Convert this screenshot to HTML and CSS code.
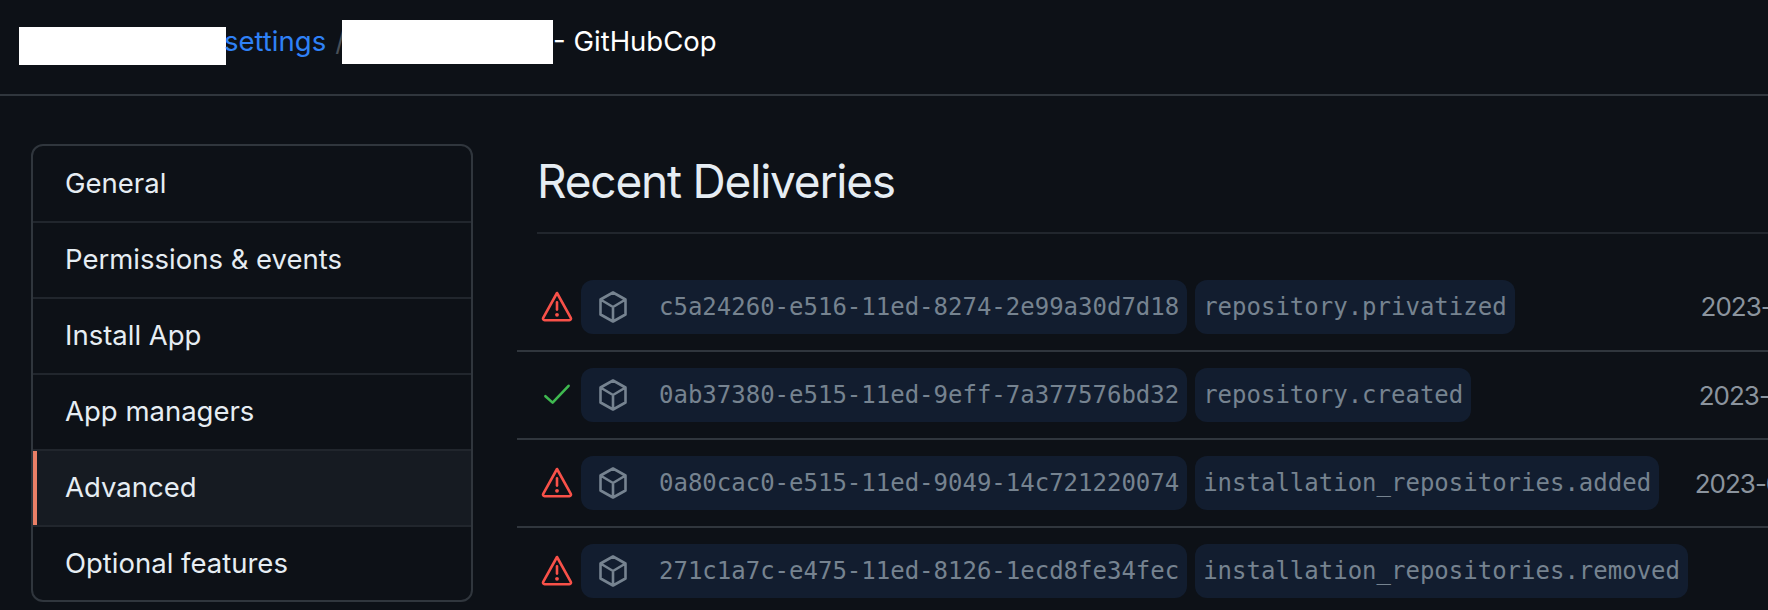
FILE: index.html
```html
<!DOCTYPE html>
<html lang="en">
<head>
<meta charset="utf-8">
<title>Recent Deliveries</title>
<link rel="stylesheet" href="styles.css">
</head>
<body>
<header class="topbar">
  <span class="mask mask-a"></span>
  <a class="crumb-link" href="#">settings</a>
  <span class="crumb-sep">/</span>
  <span class="mask mask-b"></span>
  <span class="crumb-title">- GitHubCop</span>
</header>
<div class="layout">
  <nav class="menu">
    <a class="menu-item" href="#">General</a>
    <a class="menu-item" href="#">Permissions &amp; events</a>
    <a class="menu-item" href="#">Install App</a>
    <a class="menu-item" href="#">App managers</a>
    <a class="menu-item active" href="#">Advanced</a>
    <a class="menu-item" href="#">Optional features</a>
  </nav>
  <main class="content">
    <h1 class="title">Recent Deliveries</h1>
    <ul class="deliveries">
      <li class="delivery">
        <svg class="status warn" viewBox="0 0 16 16"><path d="M8 1 14.900 13.400a.8.8 0 0 1-.7 1.200H1.800a.8.8 0 0 1-.7-1.200Z"/><path class="mark" d="M8 5.700v3.600"/><circle class="dot" cx="8" cy="11.900" r=".95"/></svg>
        <span class="pill guid">
          <svg class="cube" viewBox="0 0 30 32"><path d="M15 1.500 27.500 8.500v15L15 30.500 2.500 23.500v-15ZM2.500 8.500 15 16l12.500-7.500M15 16v14.500"/></svg>
          <code>c5a24260-e516-11ed-8274-2e99a30d7d18</code>
        </span>
        <span class="pill event"><code>repository.privatized</code></span>
        <time class="date">2023-05-07 12:14:03</time>
      </li>
      <li class="delivery">
        <svg class="status ok" viewBox="0 0 16 16"><path d="M2.200 8.600 5.800 11.800 13.800 3.400"/></svg>
        <span class="pill guid">
          <svg class="cube" viewBox="0 0 30 32"><path d="M15 1.500 27.500 8.500v15L15 30.500 2.500 23.500v-15ZM2.500 8.500 15 16l12.500-7.500M15 16v14.500"/></svg>
          <code>0ab37380-e515-11ed-9eff-7a377576bd32</code>
        </span>
        <span class="pill event"><code>repository.created</code></span>
        <time class="date">2023-05-07 12:07:56</time>
      </li>
      <li class="delivery">
        <svg class="status warn" viewBox="0 0 16 16"><path d="M8 1 14.900 13.400a.8.8 0 0 1-.7 1.200H1.800a.8.8 0 0 1-.7-1.200Z"/><path class="mark" d="M8 5.700v3.600"/><circle class="dot" cx="8" cy="11.900" r=".95"/></svg>
        <span class="pill guid">
          <svg class="cube" viewBox="0 0 30 32"><path d="M15 1.500 27.500 8.500v15L15 30.500 2.500 23.500v-15ZM2.500 8.500 15 16l12.500-7.500M15 16v14.500"/></svg>
          <code>0a80cac0-e515-11ed-9049-14c721220074</code>
        </span>
        <span class="pill event"><code>installation_repositories.added</code></span>
        <time class="date">2023-05-07 10:08:54</time>
      </li>
      <li class="delivery">
        <svg class="status warn" viewBox="0 0 16 16"><path d="M8 1 14.900 13.400a.8.8 0 0 1-.7 1.200H1.800a.8.8 0 0 1-.7-1.200Z"/><path class="mark" d="M8 5.700v3.600"/><circle class="dot" cx="8" cy="11.900" r=".95"/></svg>
        <span class="pill guid">
          <svg class="cube" viewBox="0 0 30 32"><path d="M15 1.500 27.500 8.500v15L15 30.500 2.500 23.500v-15ZM2.500 8.500 15 16l12.500-7.500M15 16v14.500"/></svg>
          <code>271c1a7c-e475-11ed-8126-1ecd8fe34fec</code>
        </span>
        <span class="pill event"><code>installation_repositories.removed</code></span>
      </li>
    </ul>
  </main>
</div>
</body>
</html>
```
FILE: styles.css
```css
* { box-sizing: border-box; }
html, body { margin: 0; height: 610px; overflow: hidden; }
body {
  background: #0d1117;
  color: #e6edf3;
  font-family: Inter, "Liberation Sans", sans-serif;
  font-size: 27.5px;
}
a { text-decoration: none; color: inherit; }

.topbar {
  display: flex;
  align-items: center;
  height: 96px;
  padding: 0 0 12px 19px;
  border-bottom: 2px solid #30363d;
}
.mask { display: block; background: #fff; flex: none; }
.mask-a { width: 207px; height: 38px; margin-top: 10px; }
.mask-b { width: 211px; height: 44px; margin-top: 2px; }
.crumb-link { color: #2f81f7; margin-left: -2px; }
.crumb-sep { color: #484f58; margin: 0 -3px 0 9px; }
.crumb-title { color: #fff; }

.layout {
  display: flex;
  align-items: flex-start;
  padding: 48px 0 0 31px;
}
.menu {
  flex: none;
  width: 442px;
  height: 458px;
  border: 2px solid #30363d;
  border-radius: 12px;
  overflow: hidden;
}
.menu-item {
  display: flex;
  align-items: center;
  height: 76px;
  padding: 0 0 2px 32px;
  border-top: 2px solid #21262d;
  color: #e6edf3;
}
.menu-item:first-child { border-top: 0; height: 75px; }
.menu-item.active {
  background: #161b22;
  box-shadow: inset 4px 0 0 #ea7f66;
}

.content {
  flex: none;
  width: 1500px;
  margin-left: 44px;
}
.title {
  margin: 0 0 0 20px;
  height: 90px;
  font-size: 46px;
  font-weight: 400;
  letter-spacing: -1.2px;
  line-height: 74px;
  border-bottom: 2px solid #21262d;
}
.deliveries { list-style: none; margin: 0; padding: 0; }
.delivery {
  display: flex;
  align-items: center;
  gap: 8px;
  height: 88px;
  padding-left: 24px;
  border-top: 2px solid #30363d;
}
.delivery:first-child { height: 116px; padding-top: 29px; border-top: 0; }
.status { flex: none; width: 32px; height: 32px; fill: none; stroke-width: 1.3; stroke-linejoin: round; stroke-linecap: round; }
.status.warn { stroke: #f85149; }
.status.warn .dot { fill: #f85149; stroke: none; }
.status.ok { stroke: #3fb950; }
.pill {
  display: flex;
  align-items: center;
  height: 54px;
  padding: 0 8px;
  border-radius: 12px;
  background: #121d2f;
  color: #768390;
  font-family: "DejaVu Sans Mono", "Liberation Mono", monospace;
  font-size: 24px;
}
.pill code { font: inherit; white-space: nowrap; }
.guid { padding-left: 17px; }
.cube { flex: none; width: 30px; height: 32px; margin-right: 31px; fill: none; stroke: #768390; stroke-width: 2.6; stroke-linejoin: round; stroke-linecap: round; }
.date {
  margin-left: auto;
  padding-right: 76px;
  color: #8b949e;
  font-size: 26px;
  letter-spacing: -1px;
  white-space: nowrap;
}
```
